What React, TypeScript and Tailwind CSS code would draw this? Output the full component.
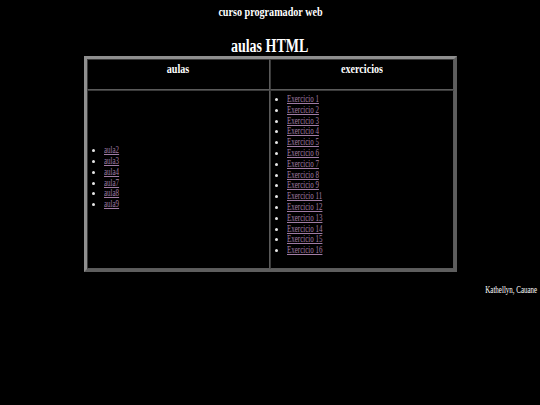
const aulas = ["aula2", "aula3", "aula4", "aula7", "aula8", "aula9"];
const exercicios = [1, 2, 3, 4, 5, 6, 7, 8, 9, 11, 12, 13, 14, 15, 16].map((n) => `Exercicio ${n}`);

function Squeeze({ children, className = "" }: { children: React.ReactNode; className?: string }) {
  return <span className={`inline-block scale-x-75 ${className}`}>{children}</span>;
}

function LinkList({ items, className = "" }: { items: string[]; className?: string }) {
  return (
    <ul className={`list-disc pl-[16px] text-[9.3px] leading-[10.8px] ${className}`}>
      {items.map((item) => (
        <li key={item} className="marker:text-[#e6e6e6]">
          <a href="#" className="text-[#a07ca4]">
            <Squeeze className="origin-left underline">{item}</Squeeze>
          </a>
        </li>
      ))}
    </ul>
  );
}

export default function App() {
  const cellCls = "border border-t-[#3a3a3a] border-l-[#3a3a3a] border-r-[#5a5a5a] border-b-[#5a5a5a] p-0";

  return (
    <div className="min-h-[405px] bg-black text-white" style={{ fontFamily: '"Liberation Serif", "Times New Roman", serif' }}>
      <h2 className="pt-[4px] text-center text-[13.5px] font-bold leading-[16px]">
        <Squeeze>curso programador web</Squeeze>
      </h2>

      <h1 className="mt-[14.6px] text-center text-[18.7px] font-bold leading-[21.5px]">
        <Squeeze>aulas HTML</Squeeze>
      </h1>

      <table className="mx-auto w-[373px] table-fixed border-separate border-spacing-0 border-[3px] border-t-[#8f8f8f] border-l-[#8f8f8f] border-r-[#5e5e5e] border-b-[#5e5e5e]">
        <thead>
          <tr>
            <th className={`${cellCls} h-[31px] pt-[1.4px] align-top text-[13.5px] font-bold leading-[16px]`}>
              <Squeeze>aulas</Squeeze>
            </th>
            <th className={`${cellCls} h-[31px] pt-[1.4px] align-top text-[13.5px] font-bold leading-[16px]`}>
              <Squeeze>exercicios</Squeeze>
            </th>
          </tr>
        </thead>
        <tbody>
          <tr>
            <td className={`${cellCls} pt-[3px] pb-[2.5px] align-middle`}>
              <LinkList items={aulas} className="mb-[4px]" />
            </td>
            <td className={`${cellCls} pt-[3px] pb-[2.5px] align-middle`}>
              <LinkList items={exercicios} className="mb-[9px]" />
            </td>
          </tr>
        </tbody>
      </table>

      <p className="mt-[13px] pr-[3px] text-right text-[9.3px] leading-[10.8px]">
        <Squeeze className="origin-right">Kathellyn, Cauane</Squeeze>
      </p>
    </div>
  );
}
